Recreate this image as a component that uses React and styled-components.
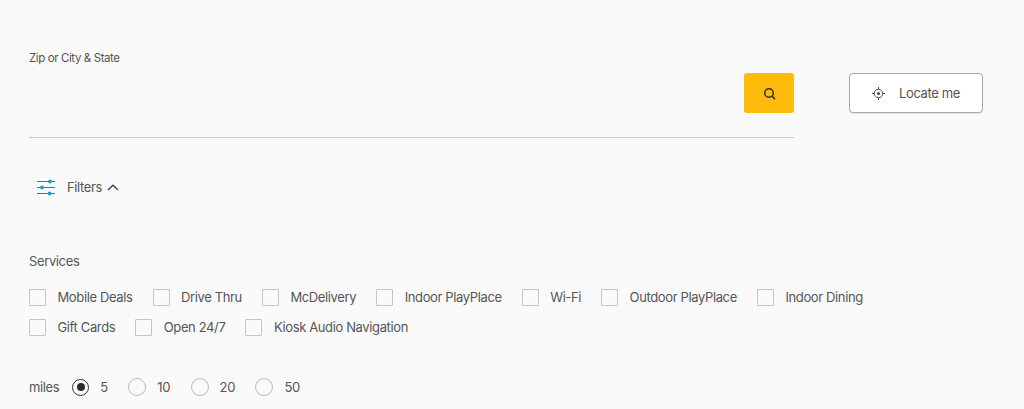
import React from "react";
import styled, { createGlobalStyle } from "styled-components";

const rowOne = ["Mobile Deals", "Drive Thru", "McDelivery", "Indoor PlayPlace", "Wi-Fi", "Outdoor PlayPlace", "Indoor Dining"];
const rowTwo = ["Gift Cards", "Open 24/7", "Kiosk Audio Navigation"];
const distances = [5, 10, 20, 50];

export default function App() {
  return (
    <Page>
      <GlobalStyle />
      <SearchRow>
        <SearchField>
          <FieldLabel>Zip or City &amp; State</FieldLabel>
          <SearchButton aria-label="Search">
            <svg width="13" height="13" viewBox="0 0 13 13" fill="none" stroke="#3a2c08" strokeWidth="1.5">
              <circle cx="6" cy="6" r="4.3" />
              <path d="M9.2 9.2 11.6 11.6" strokeLinecap="round" />
            </svg>
          </SearchButton>
        </SearchField>
        <LocateButton>
          <svg width="13" height="13" viewBox="0 0 13 13" fill="none" stroke="#555" strokeWidth="1">
            <circle cx="6.5" cy="6.5" r="4.2" />
            <circle cx="6.5" cy="6.5" r="1.5" fill="#444" stroke="none" />
            <path d="M6.5 0v2.3M6.5 10.7V13M0 6.5h2.3M10.7 6.5H13" />
          </svg>
          Locate me
        </LocateButton>
      </SearchRow>
      <FilterToggle>
        <svg width="18" height="17" viewBox="0 0 18 17" fill="none">
          <g stroke="#4d7686" strokeWidth="1">
            <path d="M0 2.5h18M0 8.5h18M0 14.5h18" />
          </g>
          <g fill="#1f9fc6">
            <circle cx="13" cy="2.5" r="1.9" />
            <circle cx="5" cy="8.5" r="1.9" />
            <circle cx="12.5" cy="14.5" r="1.9" />
          </g>
        </svg>
        <FilterText>Filters</FilterText>
        <svg width="12" height="7" viewBox="0 0 12 7" fill="none" stroke="#444" strokeWidth="1.4">
          <path d="M1 6 6 1.2 11 6" />
        </svg>
      </FilterToggle>
      <SectionTitle>Services</SectionTitle>
      <ServiceRow>
        {rowOne.map((name) => (
          <Service key={name}>
            <Box />
            {name}
          </Service>
        ))}
      </ServiceRow>
      <ServiceRow $second>
        {rowTwo.map((name) => (
          <Service key={name}>
            <Box />
            {name}
          </Service>
        ))}
      </ServiceRow>
      <MilesRow>
        <MilesLabel>miles</MilesLabel>
        {distances.map((d) => (
          <Distance key={d}>
            <Radio $checked={d === 5} />
            {d}
          </Distance>
        ))}
      </MilesRow>
    </Page>
  );
}

const GlobalStyle = createGlobalStyle`
  html, body {
    margin: 0;
    background: #fafafa;
  }
`;

const Page = styled.div`
  height: 409px;
  box-sizing: border-box;
  overflow: hidden;
  padding: 52px 0 0 29px;
  font-family: Inter, "Liberation Sans", sans-serif;
  font-size: 13px;
  color: #555;
  letter-spacing: -0.37px;
`;

const SearchRow = styled.div`
  display: flex;
  align-items: flex-start;
  gap: 55px;
`;

const SearchField = styled.div`
  width: 765px;
  height: 86px;
  box-sizing: border-box;
  border-bottom: 1px solid #c8c8c8;
  display: flex;
  justify-content: space-between;
  align-items: flex-start;
`;

const FieldLabel = styled.div`
  font-size: 11.5px;
  line-height: 13px;
  letter-spacing: -0.4px;
`;

const SearchButton = styled.div`
  width: 50px;
  height: 40px;
  margin-top: 21px;
  background: #ffbc0d;
  border-radius: 3px;
  display: flex;
  align-items: center;
  justify-content: center;
`;

const LocateButton = styled.div`
  width: 134px;
  height: 40px;
  margin-top: 21px;
  box-sizing: border-box;
  background: #fff;
  border: 1px solid #a8a8a8;
  border-radius: 4px;
  box-shadow: 0 1px 1px rgba(0, 0, 0, 0.1);
  display: flex;
  align-items: center;
  padding-left: 22px;
  gap: 14px;
`;

const FilterToggle = styled.div`
  display: flex;
  align-items: center;
  margin: 40px 0 0 8px;
  height: 18px;
`;

const FilterText = styled.span`
  margin: 0 5px 0 12px;
`;

const SectionTitle = styled.div`
  margin-top: 57px;
  line-height: 16px;
`;

const ServiceRow = styled.div`
  display: flex;
  gap: 20px;
  margin-top: ${({ $second }) => ($second ? "13px" : "20px")};
`;

const Service = styled.label`
  display: flex;
  align-items: center;
  gap: 11.5px;
  line-height: 17px;
`;

const Box = styled.span`
  width: 15px;
  height: 15px;
  background: #fafafa;
  border: 1px solid #c4c4c4;
  border-radius: 1px;
`;

const MilesRow = styled.div`
  display: flex;
  align-items: center;
  margin-top: 42px;
`;

const MilesLabel = styled.span`
  margin-right: 13px;
`;

const Distance = styled.label`
  display: flex;
  align-items: center;
  gap: 11px;
  margin-right: 20.5px;
`;

const Radio = styled.span`
  width: ${({ $checked }) => ($checked ? "15px" : "16px")};
  height: ${({ $checked }) => ($checked ? "15px" : "16px")};
  border-radius: 50%;
  background: #fafafa;
  border: ${({ $checked }) => ($checked ? "1.5px solid #333" : "1px solid #b8b8b8")};
  display: flex;
  align-items: center;
  justify-content: center;
  &::after {
    content: "";
    display: ${({ $checked }) => ($checked ? "block" : "none")};
    width: 8px;
    height: 8px;
    border-radius: 50%;
    background: #2b2b2b;
  }
`;
